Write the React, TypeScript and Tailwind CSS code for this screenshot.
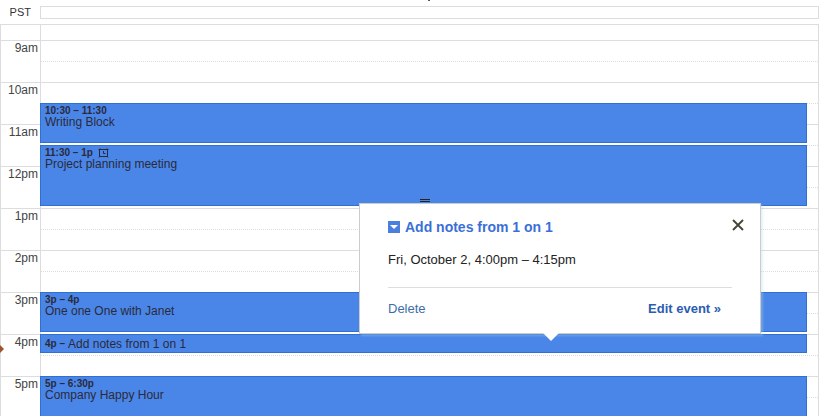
export default function App() {
  const hours = ["9am", "10am", "11am", "12pm", "1pm", "2pm", "3pm", "4pm", "5pm"];
  return (
    <div className="relative h-[416px] w-[820px] overflow-hidden bg-white font-['Liberation_Sans',Arial,sans-serif] text-[#333]">
      <div className="absolute top-0 left-[428px] h-[1px] w-[2px] bg-[#556]" />
      <div className="flex h-[24px] items-start pt-[6px]">
        <div className="w-[40px] pr-[9px] text-right text-[11px] leading-[12px] text-[#333]">PST</div>
        <div className="h-[13px] w-[779px] border border-[#ddd]" />
      </div>
      <div className="flex w-[819px] border-t border-r border-[#ddd]">
        <div className="w-[41px] shrink-0 border-x border-[#ddd]">
          <div className="h-[15px]" />
          {hours.map((h) => (
            <div key={h} className="h-[42px] border-t border-[#ddd] pr-[2px] text-right text-[12px] leading-[14px] text-[#444]">
              {h}
            </div>
          ))}
        </div>
        <div className="relative flex-1">
          <div className="h-[15px]" />
          {hours.map((h) => (
            <div key={h} className="h-[42px] border-t border-[#ddd]">
              <div className="h-[21px] border-b border-dotted border-[#ddd]" />
            </div>
          ))}
          <div className="absolute top-[78px] left-[-1px] h-[40px] w-[767px] border border-[#2f70d3] bg-[#4a86e8] pt-[1px] pl-[4px] text-[#2a2a3a]">
            <div className="text-[10px] leading-[11px] font-bold">10:30 – 11:30</div>
            <div className="text-[12px] leading-[13px]">Writing Block</div>
          </div>
          <div className="absolute top-[120px] left-[-1px] h-[61px] w-[767px] border border-[#2f70d3] bg-[#4a86e8] pt-[1px] pl-[4px] text-[#2a2a3a]">
            <div className="flex items-center gap-[5px] text-[10px] leading-[11px] font-bold">
              11:30 – 1p
              <svg width="11" height="10" viewBox="0 0 11 10" fill="none" stroke="#2a2a3a" strokeWidth="1">
                <rect x="1.5" y="1.5" width="8" height="7" />
                <path d="M0.5 2 L2 0.5 M9 0.5 L10.5 2 M5.5 3 V5.5 H7.5 M1 9.5 L2 8.5 M10 9.5 L9 8.5" />
              </svg>
            </div>
            <div className="text-[12px] leading-[13px]">Project planning meeting</div>
            <div className="absolute top-[53px] left-[379px] h-[3px] w-[10px] border-y border-[#222]" />
          </div>
          <div className="absolute top-[267px] left-[-1px] h-[40px] w-[767px] border border-[#2f70d3] bg-[#4a86e8] pt-[1px] pl-[4px] text-[#2a2a3a]">
            <div className="text-[10px] leading-[11px] font-bold">3p – 4p</div>
            <div className="text-[12px] leading-[13px]">One one One with Janet</div>
          </div>
          <div className="absolute top-[309px] left-[-1px] flex h-[19px] w-[767px] items-center gap-[3px] border border-[#2f70d3] bg-[#4a86e8] pl-[4px] text-[#2a2a3a]">
            <span className="text-[10px] font-bold">4p –</span>
            <span className="text-[12px]">Add notes from 1 on 1</span>
          </div>
          <div className="absolute top-[351px] left-[-1px] h-[60px] w-[767px] border border-[#2f70d3] bg-[#4a86e8] pt-[1px] pl-[4px] text-[#2a2a3a]">
            <div className="text-[10px] leading-[11px] font-bold">5p – 6:30p</div>
            <div className="text-[12px] leading-[13px]">Company Happy Hour</div>
          </div>
        </div>
      </div>

      <div className="absolute top-[345px] left-0 h-0 w-0 border-y-[4px] border-l-[4px] border-y-transparent border-l-[#a0522d]" />

      <div className="absolute top-[203px] left-[359px] h-[131px] w-[402px] border border-[#ccc] bg-white pr-[16px] pl-[28px] shadow-[2px_2px_2px_rgba(180,215,230,0.35)]">
        <div className="flex items-center pt-[15px]">
          <div className="flex h-[12px] w-[12px] items-center justify-center bg-[#4a7fe0]">
            <div className="h-0 w-0 border-x-[4px] border-t-[4px] border-x-transparent border-t-white" />
          </div>
          <div className="ml-[5px] text-[14px] leading-[16px] font-bold text-[#3a6fd8]">Add notes from 1 on 1</div>
          <svg className="mt-[-4px] ml-auto" width="12" height="12" viewBox="0 0 12 12" fill="none" stroke="#444433" strokeWidth="1.8">
            <path d="M1 1 L11 11 M11 1 L1 11" />
          </svg>
        </div>
        <div className="pt-[17px] text-[13px] leading-[16px] text-[#222]">Fri, October 2, 4:00pm – 4:15pm</div>
        <div className="mt-[19px] w-[344px] border-t border-[#ddd]" />
        <div className="flex w-[333px] justify-between pt-[13px] text-[13px] leading-[16px]">
          <span className="text-[#3d6da8]">Delete</span>
          <span className="font-bold text-[#2a5db0]">Edit event »</span>
        </div>
      </div>
      <svg className="absolute top-[333px] left-[543px]" width="16" height="9" viewBox="0 0 16 9">
        <path d="M0 0 L8 8 L16 0 Z" fill="white" />
      </svg>
    </div>
  );
}
